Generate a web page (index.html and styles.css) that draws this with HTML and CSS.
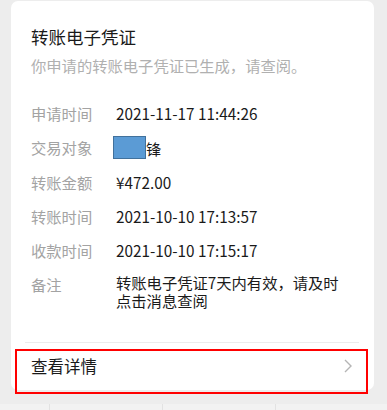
FILE: index.html
```html
<!DOCTYPE html>
<html lang="zh-CN">
<head>
<meta charset="utf-8">
<link rel="stylesheet" href="styles.css">
</head>
<body>
<div class="page">
  <div class="card">
    <div class="head">
      <div class="title">转账电子凭证</div>
      <div class="sub">你申请的转账电子凭证已生成，请查阅。</div>
    </div>
    <div class="rows">
      <div class="row"><div class="lab">申请时间</div><div class="val">2021-11-17 11:44:26</div></div>
      <div class="row"><div class="lab">交易对象</div><div class="val"><span class="mask"></span>锋</div></div>
      <div class="row"><div class="lab">转账金额</div><div class="val">¥472.00</div></div>
      <div class="row"><div class="lab">转账时间</div><div class="val">2021-10-10 17:13:57</div></div>
      <div class="row"><div class="lab">收款时间</div><div class="val">2021-10-10 17:15:17</div></div>
      <div class="row"><div class="lab">备注</div><div class="val">转账电子凭证7天内有效，请及时点击消息查阅</div></div>
    </div>
    <div class="divider"></div>
    <div class="more">
      <span class="more-text">查看详情</span>
      <svg class="chev" width="8" height="14" viewBox="0 0 8 14"><path d="M1 1l6 6-6 6" fill="none" stroke="#b5b5b5" stroke-width="1.4"/></svg>
      <div class="highlight"></div>
    </div>
  </div>
  <div class="strip">
    <div class="cell c1"></div>
    <div class="cell c2"></div>
    <div class="cell c3"></div>
    <div class="cell c4"></div>
  </div>
</div>
</body>
</html>
```
FILE: styles.css
```css
html, body {
  margin: 0;
  padding: 0;
}
body {
  background: #ededed;
  font-family: "Noto Sans CJK SC", "Noto Sans", sans-serif;
  width: 387px;
  height: 410px;
  overflow: hidden;
}
.page {
  display: flex;
  flex-direction: column;
  height: 410px;
}
.card {
  margin: 1px 13px 0 11px;
  height: 389px;
  background: #fff;
  border-radius: 7px;
  box-sizing: border-box;
  display: flex;
  flex-direction: column;
}
.head {
  padding: 24px 20px 0 20px;
}
.title {
  font-size: 17.5px;
  line-height: 24px;
  color: #1a1a1a;
}
.sub {
  margin-top: 5px;
  font-size: 15.3px;
  line-height: 22px;
  color: #b0b0b0;
}
.rows {
  padding: 26px 20px 0 20px;
  display: flex;
  flex-direction: column;
  gap: 12px;
}
.row {
  display: flex;
  font-size: 15.3px;
  line-height: 22px;
}
.lab {
  width: 85px;
  flex: none;
  color: #a3a3a3;
}
.val {
  color: #1a1a1a;
  flex: 1;
  line-height: 22px;
}
.row:last-child .val {
  line-height: 17.5px;
  padding-top: 1px;
  padding-right: 8px;
}
.mask {
  display: inline-block;
  width: 31px;
  height: 21px;
  background: #5b9bd5;
  border: 1.5px solid #41719c;
  vertical-align: -4px;
  margin-left: -3px;
}
.divider {
  margin: auto 15px 0 14px;
  height: 1px;
  background: #ececec;
}
.more {
  position: relative;
  height: 47px;
  display: flex;
  align-items: center;
  justify-content: space-between;
  padding: 0 22px 0 20px;
  box-sizing: border-box;
}
.more-text {
  font-size: 16.5px;
  color: #1a1a1a;
  margin-top: -2px;
}
.chev {
  margin-top: -2px;
}
.highlight {
  position: absolute;
  left: 4px;
  top: 6px;
  width: 349px;
  height: 41px;
  border: 2.5px solid #ff0000;
  pointer-events: none;
}
.strip {
  margin-top: 14px;
  flex: 1;
  display: flex;
  background: #f2f2f2;
}
.cell {
  border-right: 1px solid #e2e2e2;
}
.c1 { width: 49px; }
.c2 { width: 112px; }
.c3 { width: 112px; }
.c4 { flex: 1; border-right: none; }
```
